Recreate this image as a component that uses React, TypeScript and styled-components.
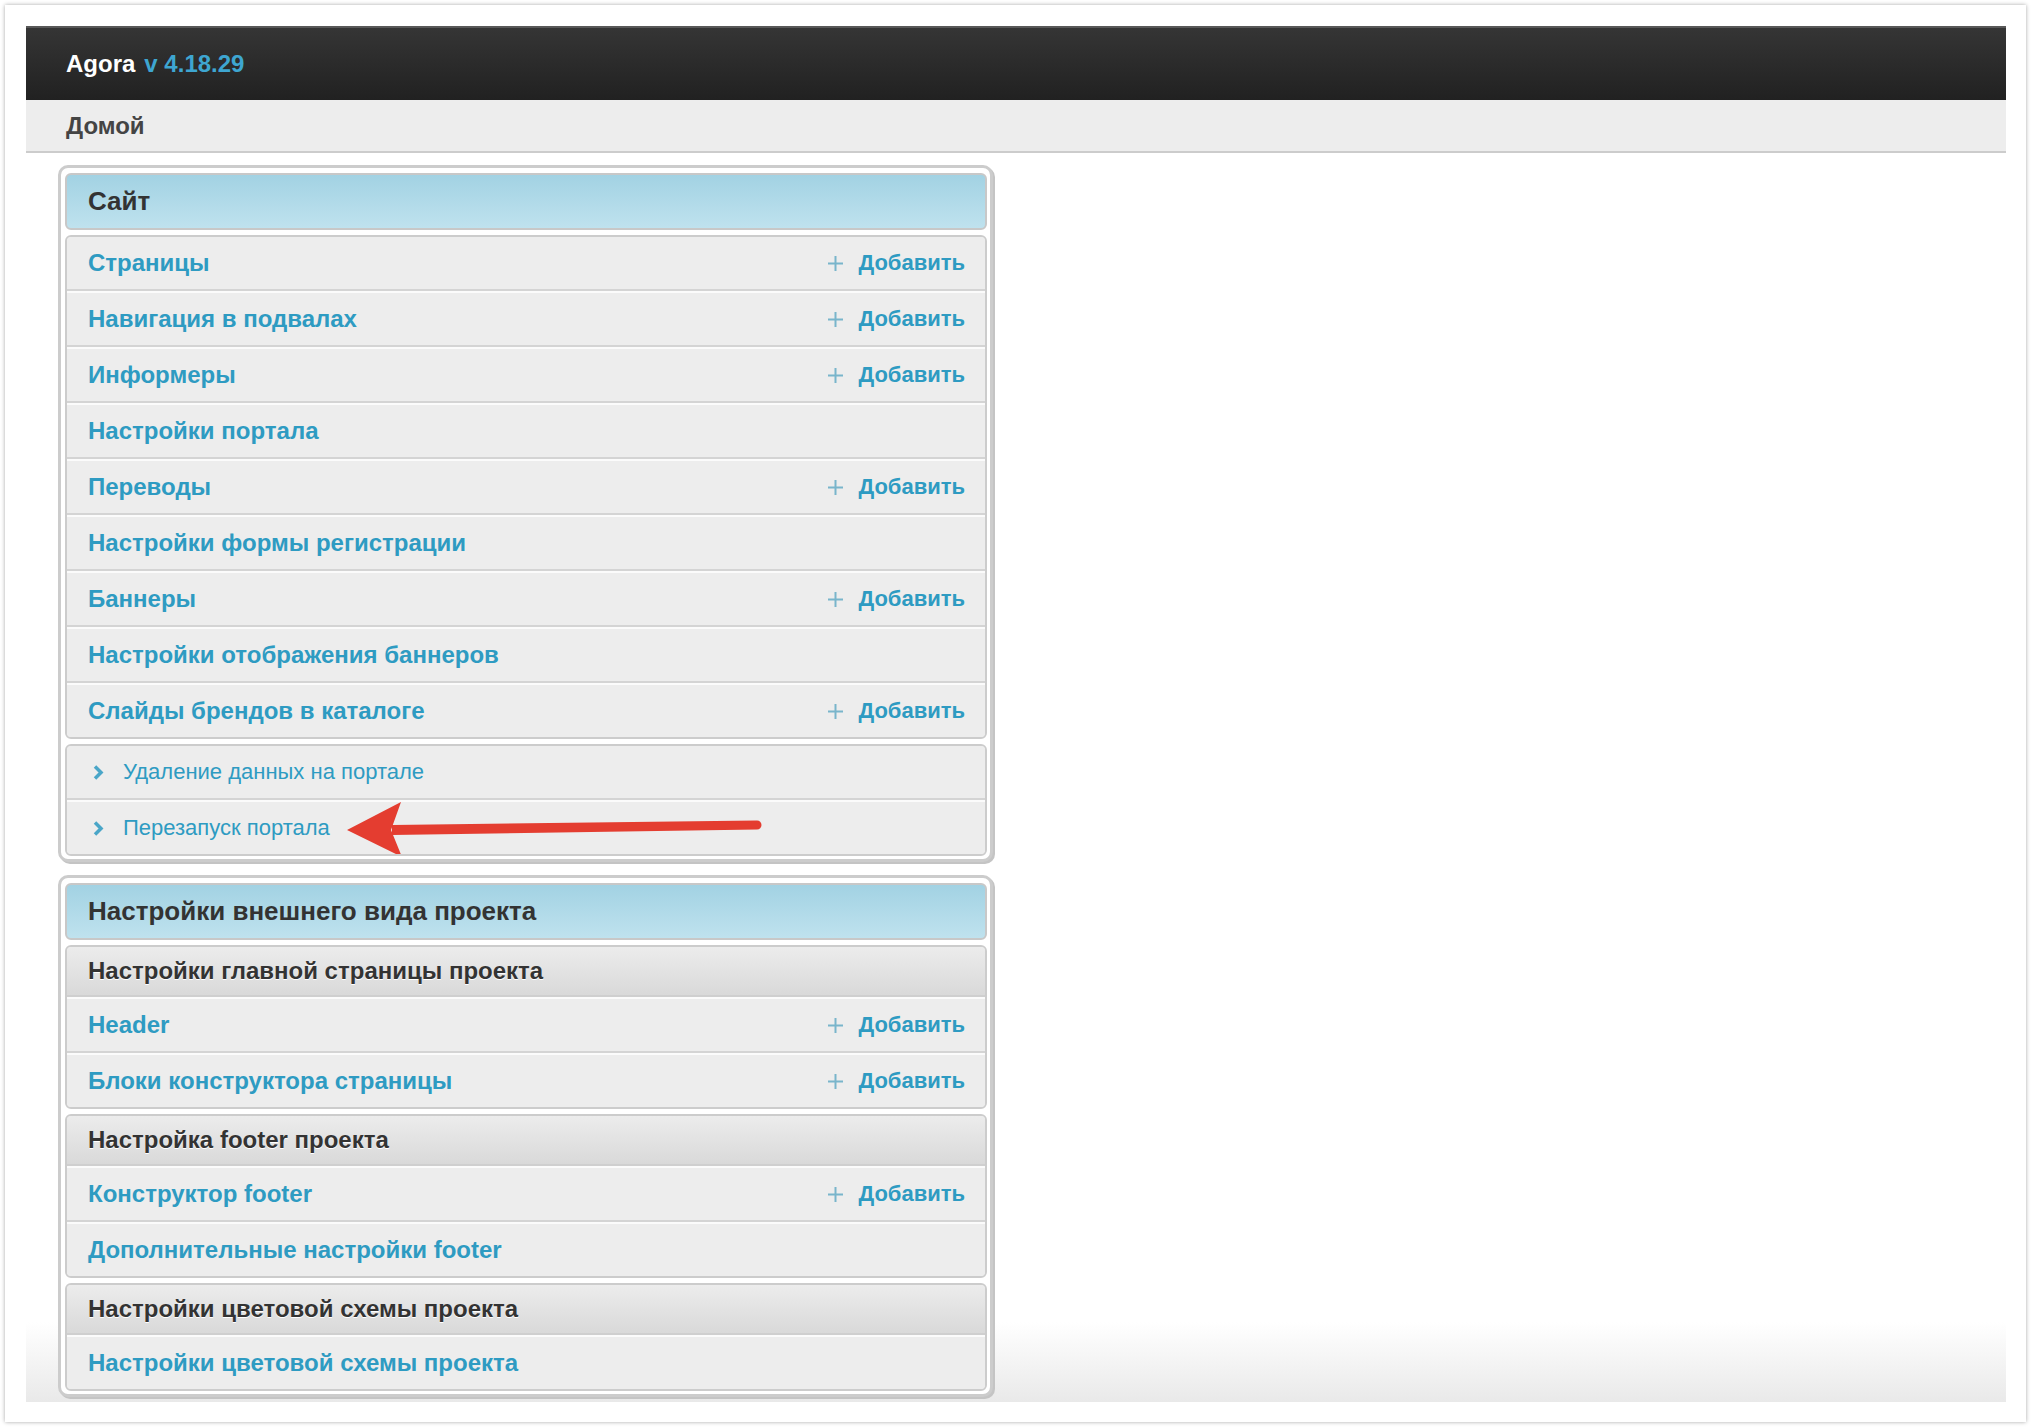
import React from "react";
import styled, { createGlobalStyle } from "styled-components";

const GlobalStyle = createGlobalStyle`
	html, body {
		margin: 0;
		padding: 0;
		background: #ffffff;
	}
	body {
		font-family: "Liberation Sans", Arial, sans-serif;
	}
	* {
		box-sizing: border-box;
	}
`;

const LINK = "#2e9bc2";
const DARK = "#333333";

const Frame = styled.div`
	margin: 5px;
	height: 1417px;
	width: 2021px;
	padding: 21px 20px 20px 21px;
	background: #ffffff;
	box-shadow: 0 0 4px rgba(0, 0, 0, 0.35);
	display: flex;
	flex-direction: column;
`;

const TopBar = styled.header`
	height: 74px;
	flex: none;
	border-top: 2px solid #585858;
	background: linear-gradient(to bottom, #353535, #212121);
	display: flex;
	align-items: center;
	padding-left: 40px;
	font-size: 24px;
	font-weight: bold;
`;

const Brand = styled.span`
	color: #ffffff;
	margin-right: 9px;
`;

const Version = styled.span`
	color: #3ea6d1;
`;

const Crumbs = styled.nav`
	height: 53px;
	flex: none;
	background: #ededed;
	border-bottom: 2px solid #cccccc;
	display: flex;
	align-items: center;
	padding-left: 40px;
	font-size: 24px;
	font-weight: bold;
	color: #444444;
`;

const Content = styled.main`
	flex: 1;
	padding: 12px 0 4px 32px;
	background: linear-gradient(to bottom, #ffffff calc(100% - 80px), #e9e9e9 100%);
	display: flex;
	flex-direction: column;
	gap: 13px;
`;

const Panel = styled.section`
	width: 935px;
	border: 3px solid #cccccc;
	border-radius: 10px;
	box-shadow: 2px 2px 0 #c4c4c4;
	background: #ffffff;
	padding: 5px 3px 3px 4px;
	display: flex;
	flex-direction: column;
	gap: 5px;
`;

const PanelTitle = styled.h2`
	margin: 0;
	height: 57px;
	border: 2px solid #c8c8c8;
	border-radius: 6px;
	background: linear-gradient(to bottom, #a2d2e3, #bfe2ee);
	display: flex;
	align-items: center;
	padding-left: 21px;
	font-size: 26px;
	font-weight: bold;
	color: ${DARK};
`;

const Group = styled.div`
	border: 2px solid #cccccc;
	border-radius: 6px;
	overflow: hidden;
	background: #ededed;
`;

const SubHeader = styled.div`
	height: 50px;
	background: linear-gradient(to bottom, #ececec, #d9d9d9);
	border-bottom: 2px solid #cfcfcf;
	display: flex;
	align-items: center;
	padding-left: 21px;
	font-size: 24px;
	font-weight: bold;
	color: ${DARK};
	text-shadow: 0 1px 0 #ffffff;
`;

const Row = styled.div<{ $plain?: boolean }>`
	position: relative;
	height: 52px;
	display: flex;
	align-items: center;
	padding: 0 20px 0 ${(p) => (p.$plain ? "25px" : "21px")};
	background: #ededed;
	border-bottom: 2px solid #d4d4d4;
	font-size: ${(p) => (p.$plain ? "22px" : "24px")};
	font-weight: ${(p) => (p.$plain ? "normal" : "bold")};
	color: ${LINK};
	box-sizing: content-box;

	& + & {
		border-top: 2px solid #fbfbfb;
	}
	&:last-child {
		border-bottom: none;
	}
	${SubHeader} + & {
		border-top: 2px solid #fbfbfb;
	}
`;

const RowLabel = styled.span`
	flex: 1;
	white-space: nowrap;
`;

const AddLink = styled.span`
	display: flex;
	align-items: center;
	gap: 15px;
	color: ${LINK};
	font-size: 22px;
	font-weight: bold;
`;

const Chevron = styled.svg`
	width: 12px;
	height: 17px;
	margin-right: 19px;
	flex: none;
`;

const Pointer = styled.svg`
	position: absolute;
	left: 270px;
	top: -4px;
	width: 430px;
	height: 64px;
	pointer-events: none;
`;

const Plus = () => (
	<svg width="15" height="15" viewBox="0 0 15 15">
		<path d="M7.5 0v15M0 7.5h15" stroke="#79b5cb" strokeWidth="2" />
	</svg>
);

const Add = () => (
	<AddLink>
		<Plus />
		Добавить
	</AddLink>
);

type Item = { label: string; add?: boolean };

const LinkRow: React.FC<Item> = ({ label, add }) => (
	<Row>
		<RowLabel>{label}</RowLabel>
		{add && <Add />}
	</Row>
);

const ToolRow: React.FC<{ label: string; pointed?: boolean }> = ({ label, pointed }) => (
	<Row $plain>
		<Chevron viewBox="0 0 12 17">
			<path d="M3 2.5l6 6-6 6" fill="none" stroke="#4aa6c8" strokeWidth="3.5" />
		</Chevron>
		<RowLabel>{label}</RowLabel>
		{pointed && (
			<Pointer viewBox="0 0 430 64">
				<path d="M55 27L420 22.5A4.5 4.5 0 0 1 420 31.5L55 37Z" fill="#e43d30" />
				<path d="M10 32L64 4L54 32L65 59Z" fill="#e43d30" />
			</Pointer>
		)}
	</Row>
);

const siteItems: Item[] = [
	{ label: "Страницы", add: true },
	{ label: "Навигация в подвалах", add: true },
	{ label: "Информеры", add: true },
	{ label: "Настройки портала" },
	{ label: "Переводы", add: true },
	{ label: "Настройки формы регистрации" },
	{ label: "Баннеры", add: true },
	{ label: "Настройки отображения баннеров" },
	{ label: "Слайды брендов в каталоге", add: true },
];

const lookGroups: { title: string; items: Item[] }[] = [
	{
		title: "Настройки главной страницы проекта",
		items: [
			{ label: "Header", add: true },
			{ label: "Блоки конструктора страницы", add: true },
		],
	},
	{
		title: "Настройка footer проекта",
		items: [
			{ label: "Конструктор footer", add: true },
			{ label: "Дополнительные настройки footer" },
		],
	},
	{
		title: "Настройки цветовой схемы проекта",
		items: [{ label: "Настройки цветовой схемы проекта" }],
	},
];

const App: React.FC = () => (
	<>
		<GlobalStyle />
		<Frame>
			<TopBar>
				<Brand>Agora</Brand>
				<Version>v 4.18.29</Version>
			</TopBar>
			<Crumbs>Домой</Crumbs>
			<Content>
				<Panel>
					<PanelTitle>Сайт</PanelTitle>
					<Group>
						{siteItems.map((item) => (
							<LinkRow key={item.label} {...item} />
						))}
					</Group>
					<Group>
						<ToolRow label="Удаление данных на портале" />
						<ToolRow label="Перезапуск портала" pointed />
					</Group>
				</Panel>
				<Panel>
					<PanelTitle>Настройки внешнего вида проекта</PanelTitle>
					{lookGroups.map((group) => (
						<Group key={group.title}>
							<SubHeader>{group.title}</SubHeader>
							{group.items.map((item) => (
								<LinkRow key={item.label} {...item} />
							))}
						</Group>
					))}
				</Panel>
			</Content>
		</Frame>
	</>
);

export default App;
